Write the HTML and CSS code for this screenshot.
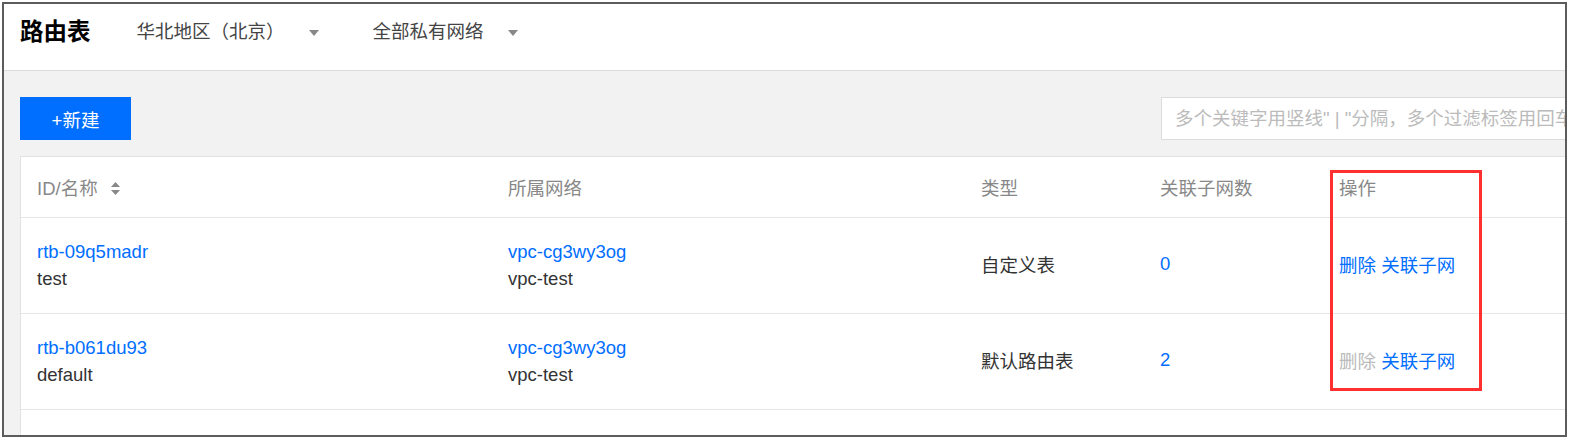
FILE: index.html
```html
<!DOCTYPE html>
<html lang="zh">
<head>
<meta charset="utf-8">
<title>路由表</title>
<link rel="stylesheet" href="styles.css">
</head>
<body>
<div class="frame">
  <div class="page">
    <header class="topbar">
      <h1 class="title">路由表</h1>
      <div class="dropdown region">华北地区（北京）<span class="caret"></span></div>
      <div class="dropdown vpc">全部私有网络<span class="caret"></span></div>
    </header>
    <main class="content">
      <div class="toolbar">
        <button class="btn-primary">+新建</button>
        <div class="search">多个关键字用竖线" | "分隔，多个过滤标签用回车键分隔</div>
      </div>
      <div class="card">
        <div class="row head">
          <div class="cell">ID/名称
            <svg class="sort" width="9" height="13" viewBox="0 0 9 13"><path d="M4.5 0 L9 5 H0 Z M4.5 13 L9 8 H0 Z" fill="#888"/></svg>
          </div>
          <div class="cell">所属网络</div>
          <div class="cell">类型</div>
          <div class="cell">关联子网数</div>
          <div class="cell">操作</div>
        </div>
        <div class="row">
          <div class="cell stack"><a class="link">rtb-09q5madr</a><span>test</span></div>
          <div class="cell stack"><a class="link">vpc-cg3wy3og</a><span>vpc-test</span></div>
          <div class="cell single">自定义表</div>
          <div class="cell single"><a class="link">0</a></div>
          <div class="cell single"><a class="link">删除</a>&nbsp;<a class="link">关联子网</a></div>
        </div>
        <div class="row">
          <div class="cell stack"><a class="link">rtb-b061du93</a><span>default</span></div>
          <div class="cell stack"><a class="link">vpc-cg3wy3og</a><span>vpc-test</span></div>
          <div class="cell single">默认路由表</div>
          <div class="cell single"><a class="link">2</a></div>
          <div class="cell single"><span class="disabled">删除</span>&nbsp;<a class="link">关联子网</a></div>
        </div>
        <div class="row empty"></div>
        <div class="highlight"></div>
      </div>
    </main>
  </div>
</div>
</body>
</html>
```

FILE: styles.css
```css
* { box-sizing: border-box; }
html, body { margin: 0; padding: 0; background: #fff; }
body {
  font-family: "Liberation Sans", "Noto Sans CJK SC", sans-serif;
  font-size: 18.5px;
  color: #333;
}
.frame {
  margin: 2px 0 0 2px;
  width: 1565px;
  height: 435px;
  border: 2px solid #5c5c5c;
  overflow: hidden;
  background: #f2f2f2;
}
.page {
  width: 1640px;
}
.topbar {
  height: 67px;
  background: #fff;
  border-bottom: 1px solid #dcdcdc;
  display: flex;
  align-items: flex-start;
  padding-left: 16px;
  line-height: 56px;
}
.title {
  margin: 0;
  font-size: 23.5px;
  font-weight: bold;
  color: #000;
  margin-right: 46px;
}
.dropdown {
  display: flex;
  align-items: center;
  color: #444;
  height: 56px;
}
.region { margin-right: 54px; }
.caret {
  margin-left: 24px;
  width: 0;
  height: 0;
  border-left: 5px solid transparent;
  border-right: 5px solid transparent;
  border-top: 6px solid #888;
  margin-top: 2px;
}
.content {
  padding: 26px 16px 0 16px;
}
.toolbar {
  display: flex;
  align-items: center;
  height: 43px;
  margin-bottom: 16px;
}
.btn-primary {
  width: 111px;
  height: 43px;
  border: none;
  background: #006eff;
  color: #fff;
  font: inherit;
  padding: 0;
}
.search {
  margin-left: auto;
  margin-right: 2px;
  width: 465px;
  height: 43px;
  background: #fff;
  border: 1px solid #dcdcdc;
  color: #bbb;
  line-height: 41px;
  padding-left: 13px;
  white-space: nowrap;
  overflow: hidden;
}
.card {
  position: relative;
  background: #fff;
  border: 1px solid #e2e2e2;
  height: 400px;
}
.row {
  display: grid;
  grid-template-columns: 471px 473px 179px 179px 1fr;
  padding-left: 16px;
  height: 96px;
  border-bottom: 1px solid #e6e6e6;
  align-items: center;
}
.row.head {
  height: 61px;
  color: #888;
}
.cell {
  display: flex;
  align-items: center;
  white-space: nowrap;
}
.cell.single { margin-top: -3px; }
.cell.stack {
  flex-direction: column;
  align-items: flex-start;
  line-height: 27px;
  margin-top: -1px;
}
.sort { margin-left: 13px; margin-top: 2px; }
.link { color: #006eff; text-decoration: none; }
.disabled { color: #bbb; }
.highlight {
  position: absolute;
  left: 1309px;
  top: 13px;
  width: 152px;
  height: 221px;
  border: 3px solid #ff3030;
}
```
